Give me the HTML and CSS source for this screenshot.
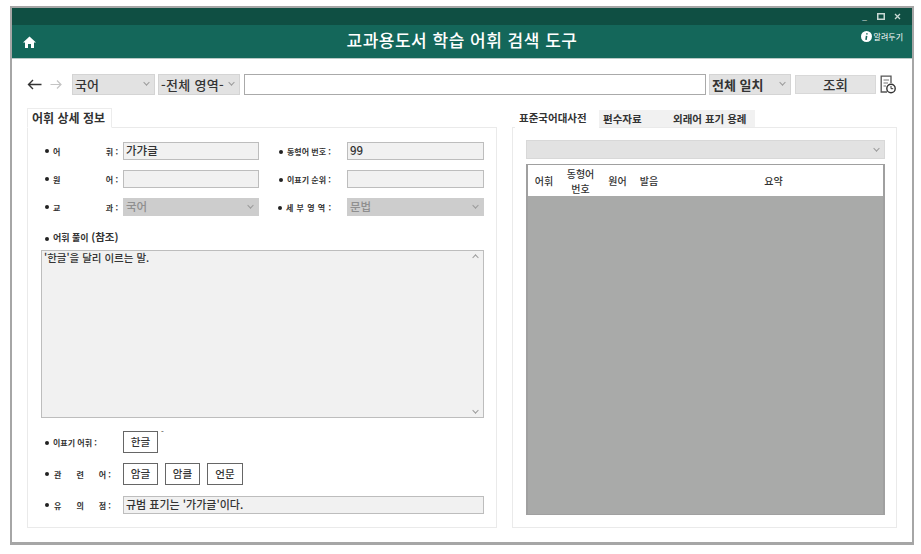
FILE: index.html
```html
<!DOCTYPE html>
<html lang="ko">
<head>
    <meta charset="utf-8">
    <title>교과용도서 학습 어휘 검색 도구</title>
    <link rel="stylesheet" href="styles.css">
</head>
<body>
    <div class="window">
        <!-- Title strip -->
        <div class="strip">
            <span class="win-btn">_</span>
            <svg class="win-max" width="8" height="7" viewBox="0 0 8 7"><rect x="0.75" y="0.75" width="6.5" height="5.5" fill="none" stroke="#c9d8d4" stroke-width="1.5"/></svg>
            <svg class="win-close" width="7" height="7" viewBox="0 0 7 7"><path d="M1 1L6 6M6 1L1 6" stroke="#c9d8d4" stroke-width="1.3"/></svg>
        </div>

        <!-- Header -->
        <div class="header">
            <svg class="home" width="13" height="12" viewBox="0 0 13 12"><path d="M6.5 0.5L13 6.5H11V12H8V8H5V12H2V6.5H0Z" fill="#fff"/></svg>
            <h1>교과용도서 학습 어휘 검색 도구</h1>
            <div class="notice">
                <svg width="11" height="11" viewBox="0 0 11 11"><circle cx="5.5" cy="5.5" r="5.5" fill="#fff"/><path d="M5.9 2.2V3.6M5.6 4.9L5 8.8" stroke="#14675a" stroke-width="1.6"/></svg>
                <span>알려두기</span>
            </div>
        </div>

        <!-- Search bar -->
        <div class="toolbar">
            <svg class="arrow" width="15" height="11" viewBox="0 0 15 11"><path d="M14.5 5.5H1.5M6 1L1.5 5.5L6 10" fill="none" stroke="#333" stroke-width="1.4"/></svg>
            <svg class="arrow next" width="12" height="11" viewBox="0 0 12 11"><path d="M0.5 5.5H11M7 1.5L11 5.5L7 9.5" fill="none" stroke="#c4c4c4" stroke-width="1.2"/></svg>
            <div class="select subject"><span>국어</span><i class="chev"></i></div>
            <div class="select area"><span>-전체 영역-</span><i class="chev"></i></div>
            <div class="search"></div>
            <div class="select match"><span>전체 일치</span><i class="chev"></i></div>
            <div class="lookup">조회</div>
            <svg class="history" width="16" height="19" viewBox="0 0 16 19">
                <path d="M11 8V1.2H1.2V17H7" fill="none" stroke="#555" stroke-width="1.3"/>
                <path d="M3.5 5H9M3.5 8H8M3.5 11H6" stroke="#777" stroke-width="1"/>
                <circle cx="11" cy="13.5" r="4.2" fill="#fff" stroke="#333" stroke-width="1.4"/>
                <path d="M11 11V13.7H13.2" fill="none" stroke="#333" stroke-width="1"/>
            </svg>
        </div>

        <div class="columns">
            <!-- Word details -->
            <section class="left">
                <div class="tabs"><div class="tab active info">어휘 상세 정보</div></div>
                <div class="panel detail">
                    <div class="grid">
                        <div class="label split"><b>어</b><b>휘 :</b></div>
                        <div class="field">가갸글</div>
                        <div class="label two">동형어 번호 :</div>
                        <div class="field">99</div>
                        <div class="label split"><b>원</b><b>어 :</b></div>
                        <div class="field"></div>
                        <div class="label two">이표기 순위 :</div>
                        <div class="field"></div>
                        <div class="label split"><b>교</b><b>과 :</b></div>
                        <div class="field off">국어<i class="chev"></i></div>
                        <div class="label two wide">세 부 영 역 :</div>
                        <div class="field off">문법<i class="chev"></i></div>
                    </div>
                    <div class="label meaning">어휘 풀이 <em>(참조)</em></div>
                    <div class="memo">
                        <span>'한글'을 달리 이르는 말.</span>
                        <i class="chev up"></i>
                        <i class="chev down"></i>
                    </div>
                    <div class="row alt">
                        <div class="label row-label">이표기 어휘 :</div>
                        <div class="word">한글</div>
                        <span class="tick">-</span>
                    </div>
                    <div class="row rel">
                        <div class="label row-label spread"><b>관</b><b>련</b><b>어 :</b></div>
                        <div class="word">암글</div>
                        <div class="word">암클</div>
                        <div class="word last">언문</div>
                    </div>
                    <div class="row note">
                        <div class="label row-label spread"><b>유</b><b>의</b><b>점 :</b></div>
                        <div class="field grow">규범 표기는 '가가글'이다.</div>
                    </div>
                </div>
            </section>

            <!-- Dictionary -->
            <section class="right">
                <div class="tabs">
                    <div class="tab active dict">표준국어대사전</div>
                    <div class="tab source">편수자료</div>
                    <div class="tab foreign">외래어 표기 용례</div>
                </div>
                <div class="panel dict-panel">
                    <div class="combo"><i class="chev"></i></div>
                    <div class="table">
                        <div class="thead">
                            <div class="c1">어휘</div>
                            <div class="c2">동형어<br>번호</div>
                            <div class="c3">원어</div>
                            <div class="c4">발음</div>
                            <div class="c5">요약</div>
                        </div>
                        <div class="tbody"></div>
                    </div>
                </div>
            </section>
        </div>
    </div>
</body>
</html>
```

FILE: styles.css
```css
* {
    box-sizing: border-box;
}

body {
    margin: 0;
    background-color: #fff;
    font-family: "Noto Sans CJK KR", "Liberation Sans", sans-serif;
    color: #333;
}

.window {
    width: 904px;
    height: 539px;
    margin: 6px 0 0 10px;
    border: 2px solid #a6a6a6;
    border-bottom-width: 3px;
    background-color: #fff;
    display: flex;
    flex-direction: column;
}

/* top bars */
.strip {
    height: 17px;
    background-color: #0f4f43;
    display: flex;
    justify-content: flex-end;
    align-items: center;
    gap: 9px;
    padding-right: 11px;
    flex-shrink: 0;
}

.win-btn {
    color: #c9d8d4;
    font-size: 9px;
    line-height: 9px;
    margin-right: 1px;
}

.header {
    height: 34px;
    background-color: #14675a;
    border-bottom: 1px solid #b9c9c5;
    display: flex;
    align-items: center;
    position: relative;
    flex-shrink: 0;
}

.home {
    margin-left: 11px;
}

.header h1 {
    flex: 1;
    margin: 0 24px 4px 0;
    text-align: center;
    color: #fff;
    font-size: 17px;
    font-weight: 500;
    letter-spacing: 0.5px;
    line-height: 26px;
}

.notice {
    position: absolute;
    top: 6px;
    right: 9px;
    display: flex;
    align-items: center;
    gap: 2px;
    color: #fff;
    font-size: 8px;
}

/* search bar */
.toolbar {
    display: flex;
    align-items: center;
    height: 22px;
    margin-top: 14px;
    padding-left: 15px;
    flex-shrink: 0;
}

.arrow.next {
    margin-left: 8px;
    margin-right: 10px;
}

.select {
    height: 21px;
    background-color: #e2e2e2;
    border: 1px solid #d4d4d4;
    display: flex;
    align-items: center;
    padding-left: 2px;
    font-size: 13px;
    font-weight: 500;
    position: relative;
    flex-shrink: 0;
}

.subject {
    width: 83px;
}

.area {
    width: 82px;
    margin-left: 3px;
    font-size: 13px;
    letter-spacing: 0.3px;
}

.match {
    width: 82px;
    margin-left: 3px;
    font-weight: 700;
    font-size: 13px;
}

.chev {
    position: absolute;
    right: 5px;
    top: 50%;
    width: 5px;
    height: 5px;
    margin-top: -4px;
    border-right: 1px solid #999;
    border-bottom: 1px solid #999;
    transform: rotate(45deg) scale(0.9);
}

.search {
    width: 462px;
    height: 21px;
    margin-left: 4px;
    border: 1px solid #aaa;
    background-color: #fff;
    flex-shrink: 0;
}

.lookup {
    width: 81px;
    height: 19px;
    margin-left: 4px;
    background-color: #e4e4e4;
    border: 1px solid #d8d8d8;
    text-align: center;
    font-size: 13.5px;
    font-weight: 500;
    line-height: 16px;
    flex-shrink: 0;
}

.history {
    margin-left: 4px;
    flex-shrink: 0;
}

/* two columns */
.columns {
    display: flex;
    margin-top: 13px;
    padding-left: 15px;
}

.left {
    width: 470px;
}

.right {
    width: 385px;
    margin-left: 15px;
}

.tabs {
    display: flex;
    height: 19px;
    position: relative;
    z-index: 1;
}

.tab {
    font-size: 10.5px;
    font-weight: 700;
    line-height: 17px;
    padding: 0 6px;
    color: #333;
    white-space: nowrap;
}

.tab.active {
    background-color: #fff;
    border: 1px solid #ececec;
    border-bottom-color: #fff;
    height: 20px;
}

.tab.info {
    width: 85px;
    font-size: 12px;
    padding: 0 4px;
}

.tab.dict {
    width: 84px;
    padding: 0 3px;
    border-color: #fff;
    margin-left: 3px;
}

.tab.source {
    width: 70px;
    margin-top: 2px;
    height: 17px;
    background-color: #f1f1f1;
    padding: 0 4px;
}

.tab.foreign {
    width: 86px;
    margin-top: 2px;
    height: 17px;
    background-color: #f1f1f1;
    padding: 0 4px;
}

.panel {
    border: 1px solid #eaeaea;
    height: 401px;
}

.detail {
    padding: 14px 12px 0 13px;
}

/* form rows */
.grid {
    display: grid;
    grid-template-columns: 82px 136px 88px 137px;
    grid-auto-rows: 18px;
    row-gap: 10px;
    align-items: center;
}

.label {
    font-size: 8px;
    font-weight: 700;
    color: #333;
    padding-left: 4px;
    position: relative;
    white-space: nowrap;
}

.label::before {
    content: "";
    display: inline-block;
    width: 4px;
    height: 4px;
    border-radius: 50%;
    background-color: #222;
    margin-right: 4px;
    vertical-align: middle;
}

.label b {
    font-weight: 700;
}

.split {
    display: flex;
    align-items: center;
    padding-right: 5px;
}

.split b:first-of-type {
    margin-right: auto;
}

.two {
    padding-left: 20px;
}

.two.wide {
    padding-left: 19px;
    word-spacing: 1px;
}

.field {
    height: 18px;
    background-color: #f1f1f1;
    border: 1px solid #bdbdbd;
    font-size: 11.5px;
    font-weight: 500;
    line-height: 14px;
    padding-left: 2px;
    position: relative;
    color: #333;
}

.field.off {
    background-color: #cdcdcd;
    border-color: #cdcdcd;
    color: #8f8f8f;
}

.meaning {
    margin-top: 15px;
    line-height: 12px;
    font-size: 9px;
}

.meaning em {
    font-style: normal;
    font-size: 10.5px;
}

.memo {
    width: 443px;
    height: 168px;
    margin-top: 6px;
    background-color: #f1f1f1;
    border: 1px solid #bdbdbd;
    font-size: 10.5px;
    font-weight: 500;
    padding: 0 2px;
    line-height: 14px;
    position: relative;
}

.chev.up {
    top: 8px;
    transform: rotate(225deg) scale(0.9);
}

.chev.down {
    top: auto;
    bottom: 4px;
}

.row {
    display: flex;
    align-items: center;
    position: relative;
}

.row-label {
    width: 82px;
    flex-shrink: 0;
}

.spread {
    display: flex;
    align-items: center;
    gap: 15px;
    padding-right: 0;
}

.spread::before {
    margin-right: -10px;
}

.word {
    height: 22px;
    width: 35px;
    margin-right: 7px;
    border: 1px solid #666;
    background-color: #fff;
    text-align: center;
    font-size: 10.5px;
    font-weight: 500;
    line-height: 19px;
}

.word.last {
    width: 36px;
}

.tick {
    font-size: 8px;
    line-height: 8px;
    margin: -20px 0 0 -4px;
}

.alt {
    margin-top: 13px;
}

.rel {
    margin-top: 10px;
}

.note {
    margin-top: 11px;
}

.field.grow {
    width: 361px;
    flex-shrink: 0;
    font-size: 11px;
}

/* dictionary panel */
.dict-panel {
    padding: 12px 11px 0 13px;
}

.combo {
    height: 19px;
    background-color: #e2e2e2;
    border: 1px solid #d8d8d8;
    position: relative;
}

.table {
    height: 351px;
    margin-top: 5px;
    border: 2px solid #a0a0a0;
    border-top-width: 1px;
    border-bottom-width: 1px;
    display: flex;
    flex-direction: column;
}

.thead {
    height: 31px;
    display: flex;
    align-items: center;
    text-align: center;
    font-size: 10px;
    font-weight: 500;
    line-height: 15px;
    flex-shrink: 0;
}

.c1 {
    width: 32px;
}

.c2 {
    width: 41px;
}

.c3 {
    width: 33px;
}

.c4 {
    width: 30px;
}

.c5 {
    flex: 1;
}

.tbody {
    flex: 1;
    background-color: #a9aaa9;
}
```
